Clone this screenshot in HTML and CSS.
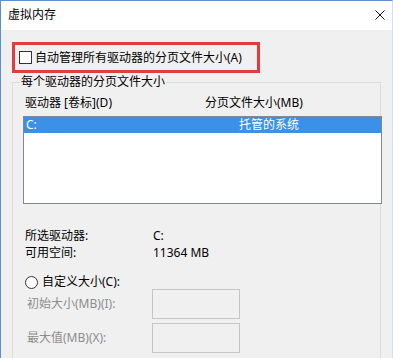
FILE: index.html
```html
<!DOCTYPE html>
<html lang="zh-CN">
<head>
    <meta charset="UTF-8">
    <meta name="viewport" content="width=device-width, initial-scale=1.0">
    <title>虚拟内存</title>
    <link rel="stylesheet" href="styles.css">
</head>
<body>
    <div class="window">
        <div class="titlebar">
            <span class="title">虚拟内存</span>
            <svg class="close" width="10" height="10" viewBox="0 0 10 10">
                <path d="M0.5 0.5 L9.5 9.5 M9.5 0.5 L0.5 9.5" stroke="#111" stroke-width="1" fill="none"/>
            </svg>
        </div>

        <div class="highlight">
            <label class="check-row">
                <span class="checkbox"></span>
                <span>自动管理所有驱动器的分页文件大小(A)</span>
            </label>
        </div>

        <fieldset class="group">
            <legend>每个驱动器的分页文件大小</legend>
            <div class="list-head">
                <span class="col-drive">驱动器 [卷标](D)</span>
                <span>分页文件大小(MB)</span>
            </div>
            <div class="listbox">
                <div class="list-row selected">
                    <span class="col-drive-cell">C:</span>
                    <span>托管的系统</span>
                </div>
            </div>

            <div class="info">
                <span>所选驱动器:</span><span>C:</span>
                <span>可用空间:</span><span>11364 MB</span>
            </div>

            <label class="radio-row">
                <span class="radio"></span>
                <span>自定义大小(C):</span>
            </label>
            <div class="size-fields">
                <span class="disabled">初始大小(MB)(I):</span>
                <span class="field"></span>
                <span class="disabled">最大值(MB)(X):</span>
                <span class="field"></span>
            </div>
        </fieldset>
    </div>
</body>
</html>
```

FILE: styles.css
```css
body {
    margin: 0;
    font-family: "Noto Sans", "Noto Sans CJK SC", sans-serif;
    font-size: 12px;
    color: #000;
    background: #f0f0f0;
}
.window {
    width: 393px;
    height: 358px;
    box-sizing: border-box;
    border-top: 1px solid #5b8fd0;
    border-left: 1px solid #5b8fd0;
    border-right: 1px solid #cfe0f4;
    background: #f0f0f0;
    overflow: hidden;
}
.titlebar {
    height: 29px;
    background: #fff;
    display: flex;
    align-items: center;
    justify-content: space-between;
    padding: 0 7px 0 7px;
}
.title { line-height: 16px; padding-bottom: 1px; }
.close { display: block; margin-bottom: 1px; }

.highlight {
    margin: 12px 0 0 11px;
    width: 248px;
    height: 31px;
    box-sizing: border-box;
    border: 3px solid #e23c3f;
    display: flex;
    align-items: center;
    padding-left: 4px;
}
.check-row { display: flex; align-items: center; gap: 3px; line-height: 16px; }
.checkbox {
    width: 13px;
    height: 13px;
    box-sizing: border-box;
    border: 1px solid #333;
    background: #fff;
}

.group {
    margin: 0 11px 0 11px;
    padding: 0 0 30px 10px;
    border: 1px solid #dcdcdc;
    min-width: 0;
}
.group legend {
    padding: 0 1px;
    margin-left: -3px;
    line-height: 18px;
}
.list-head {
    display: flex;
    margin-top: 4px;
    line-height: 16px;
    padding-left: 2px;
}
.col-drive { width: 180px; }
.listbox {
    margin: 5px -2px 0 0;
    height: 88px;
    box-sizing: border-box;
    border: 1px solid #828790;
    background: #fff;
}
.list-row {
    display: flex;
    height: 16px;
    line-height: 16px;
    padding-left: 2px;
}
.list-row.selected { background: #3b91e8; color: #fff; }
.col-drive-cell { width: 213px; }

.info {
    display: grid;
    grid-template-columns: 128px auto;
    margin-top: 23px;
    line-height: 17px;
    padding-left: 2px;
}

.radio-row {
    display: flex;
    align-items: center;
    gap: 4px;
    height: 14px;
    margin-top: 14px;
    padding-left: 2px;
    line-height: 14px;
}
.radio {
    width: 13px;
    height: 13px;
    box-sizing: border-box;
    border: 1px solid #333;
    border-radius: 50%;
    background: #fff;
}

.size-fields {
    display: grid;
    grid-template-columns: 125px 88px;
    grid-auto-rows: 30px;
    row-gap: 4px;
    align-items: center;
    padding-left: 4px;
}
.disabled { color: #8d8d8d; line-height: 16px; }
.field {
    height: 30px;
    box-sizing: border-box;
    border: 1px solid #c5c5c5;
    background: #f0f0f0;
}
```
